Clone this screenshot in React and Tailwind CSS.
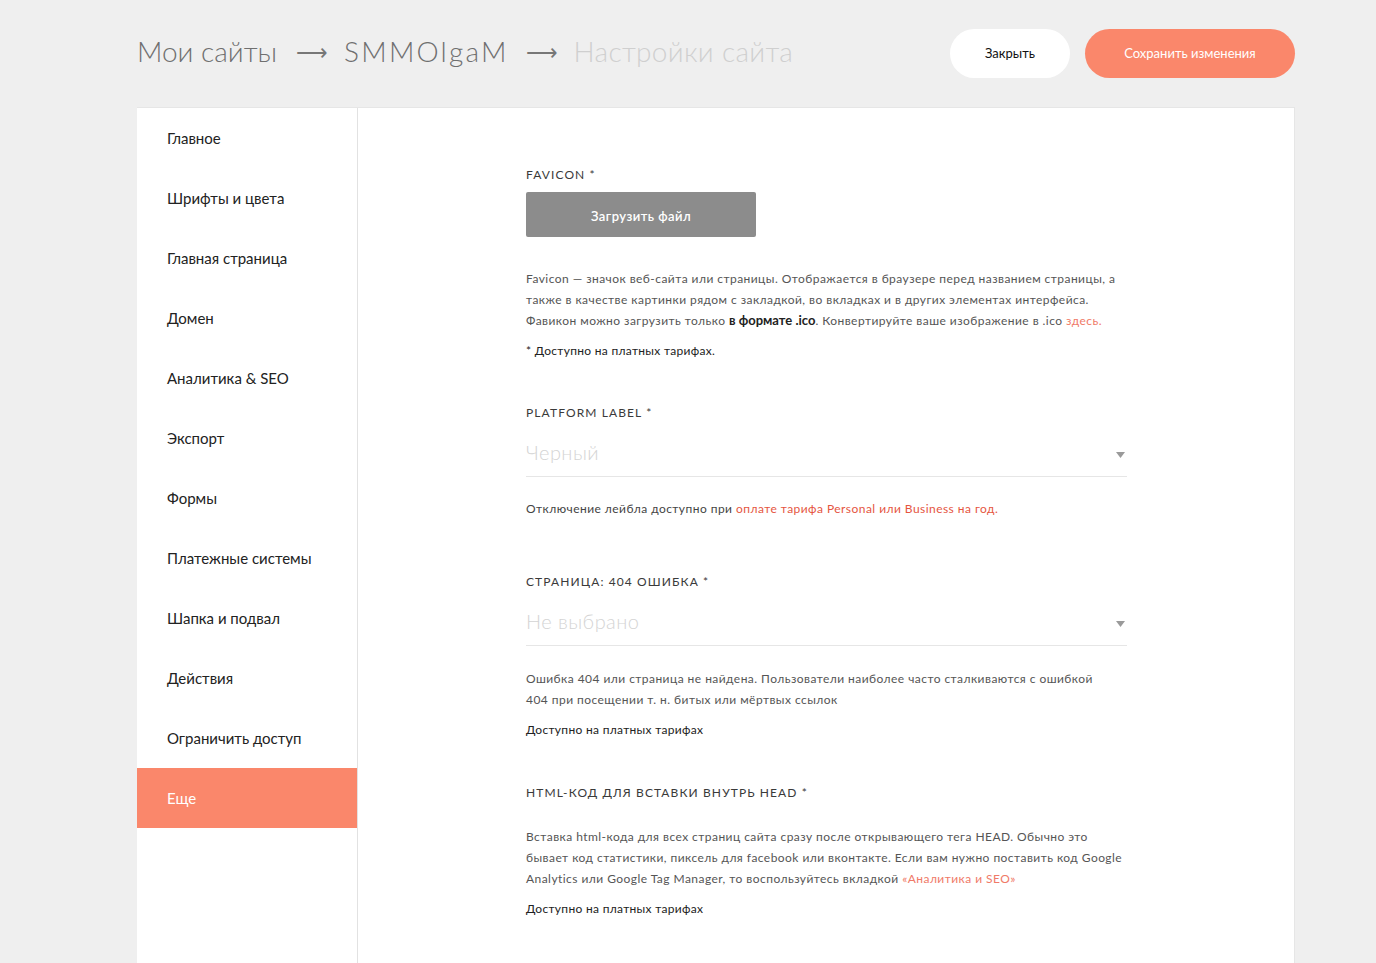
import React from "react";

const NAV = [
  "Главное",
  "Шрифты и цвета",
  "Главная страница",
  "Домен",
  "Аналитика & SEO",
  "Экспорт",
  "Формы",
  "Платежные системы",
  "Шапка и подвал",
  "Действия",
  "Ограничить доступ",
  "Еще",
];

function Label({ children, className = "" }) {
  return (
    <div className={`text-[12px] leading-4 tracking-[1.1px] uppercase text-[#3a3a3a] whitespace-nowrap ${className}`}>
      {children}
    </div>
  );
}

function Select({ value }) {
  return (
    <div className="h-[56px] flex items-center justify-between pt-2 border-b border-[#e6e6e6]">
      <span className="text-[20px] font-light text-[#d4d4d4]">{value}</span>
      <svg width="9" height="6" viewBox="0 0 9 6" className="mr-[2px] mt-[4px]">
        <path d="M0 0h9L4.5 6z" fill="#9a9a9a" />
      </svg>
    </div>
  );
}

export default function App() {
  return (
    <div className="min-h-screen bg-[#efefef] font-['Lato','Noto_Sans',sans-serif]">
      {/* Header */}
      <div className="flex items-center justify-between pl-[137px] pr-[81px] h-[107px]">
        <div className="flex items-center text-[28px] font-light mb-[5px]">
          <span className="text-[#6f6f6f]">Мои сайты</span>
          <span className="ml-[19px] mr-[16px] text-[22px] text-[#777]">⟶</span>
          <span className="text-[#6f6f6f] tracking-[2.2px]">SMMOlgaM</span>
          <span className="ml-[17px] mr-[16px] text-[22px] text-[#777]">⟶</span>
          <span className="text-[#cfcfcf] tracking-[0.3px]">Настройки сайта</span>
        </div>
        <div className="flex items-center gap-[15px]">
          <button className="w-[120px] h-[49px] rounded-full bg-white text-[13px] text-[#111]">
            Закрыть
          </button>
          <button className="w-[210px] h-[49px] rounded-full bg-[#fa876b] text-[13px] text-white">
            Сохранить изменения
          </button>
        </div>
      </div>

      {/* Card */}
      <div className="ml-[137px] mr-[81px] bg-white border-t border-r border-[#e6e6e6] flex min-h-[856px]">
        <div className="w-[221px] shrink-0 border-r border-[#e2e2e2]">
          {NAV.map((item, i) => {
            const active = i === NAV.length - 1;
            return (
              <div
                key={item}
                className={`h-[60px] flex items-center pl-[30px] text-[15px] ${active ? "bg-[#fa876b] text-white" : "text-[#222]"}`}
              >
                {item}
              </div>
            );
          })}
        </div>

        <div className="flex-1 pl-[168px] pt-[59px] text-[12px] leading-[21px] tracking-[0.45px] whitespace-nowrap">
          <div className="w-[601px]">
            {/* Favicon */}
            <Label>Favicon *</Label>
            <button className="mt-[9px] w-[230px] h-[45px] pt-1 rounded-[2px] bg-[#8c8c8c] text-white text-[13px] font-semibold">
              Загрузить файл
            </button>
            <p className="mt-[31px] text-[#555]">
              Favicon — значок веб-сайта или страницы. Отображается в браузере перед названием страницы, а
              <br />
              также в качестве картинки рядом с закладкой, во вкладках и в других элементах интерфейса.
              <br />
              Фавикон можно загрузить только <b className="text-[#222] font-bold text-[13px] tracking-normal">в формате .ico</b>. Конвертируйте ваше изображение в .ico{" "}
              <span className="text-[#f07a68]">здесь.</span>
            </p>
            <p className="mt-[9px] text-[#222] tracking-[0.3px]">* Доступно на платных тарифах.</p>

            {/* Platform label */}
            <Label className="mt-[44px]">Platform label *</Label>
            <Select value="Черный" />
            <p className="mt-[21px] text-[#444]">
              Отключение лейбла доступно при{" "}
              <span className="text-[#e5553f]">оплате тарифа Personal или Business на год.</span>
            </p>

            {/* 404 */}
            <Label className="mt-[55px]">Страница: 404 ошибка *</Label>
            <Select value="Не выбрано" />
            <p className="mt-[22px] text-[#555]">
              Ошибка 404 или страница не найдена. Пользователи наиболее часто сталкиваются с ошибкой
              <br />
              404 при посещении т. н. битых или мёртвых ссылок
            </p>
            <p className="mt-[9px] text-[#222] tracking-[0.3px]">Доступно на платных тарифах</p>

            {/* HTML head */}
            <Label className="mt-[45px]">HTML-код для вставки внутрь HEAD *</Label>
            <p className="mt-[25px] text-[#555]">
              Вставка html-кода для всех страниц сайта сразу после открывающего тега HEAD. Обычно это
              <br />
              бывает код статистики, пиксель для facebook или вконтакте. Если вам нужно поставить код Google
              <br />
              Analytics или Google Tag Manager, то воспользуйтесь вкладкой{" "}
              <span className="text-[#f07a68]">«Аналитика и SEO»</span>
            </p>
            <p className="mt-[9px] text-[#222] tracking-[0.3px]">Доступно на платных тарифах</p>
          </div>
        </div>
      </div>
    </div>
  );
}
